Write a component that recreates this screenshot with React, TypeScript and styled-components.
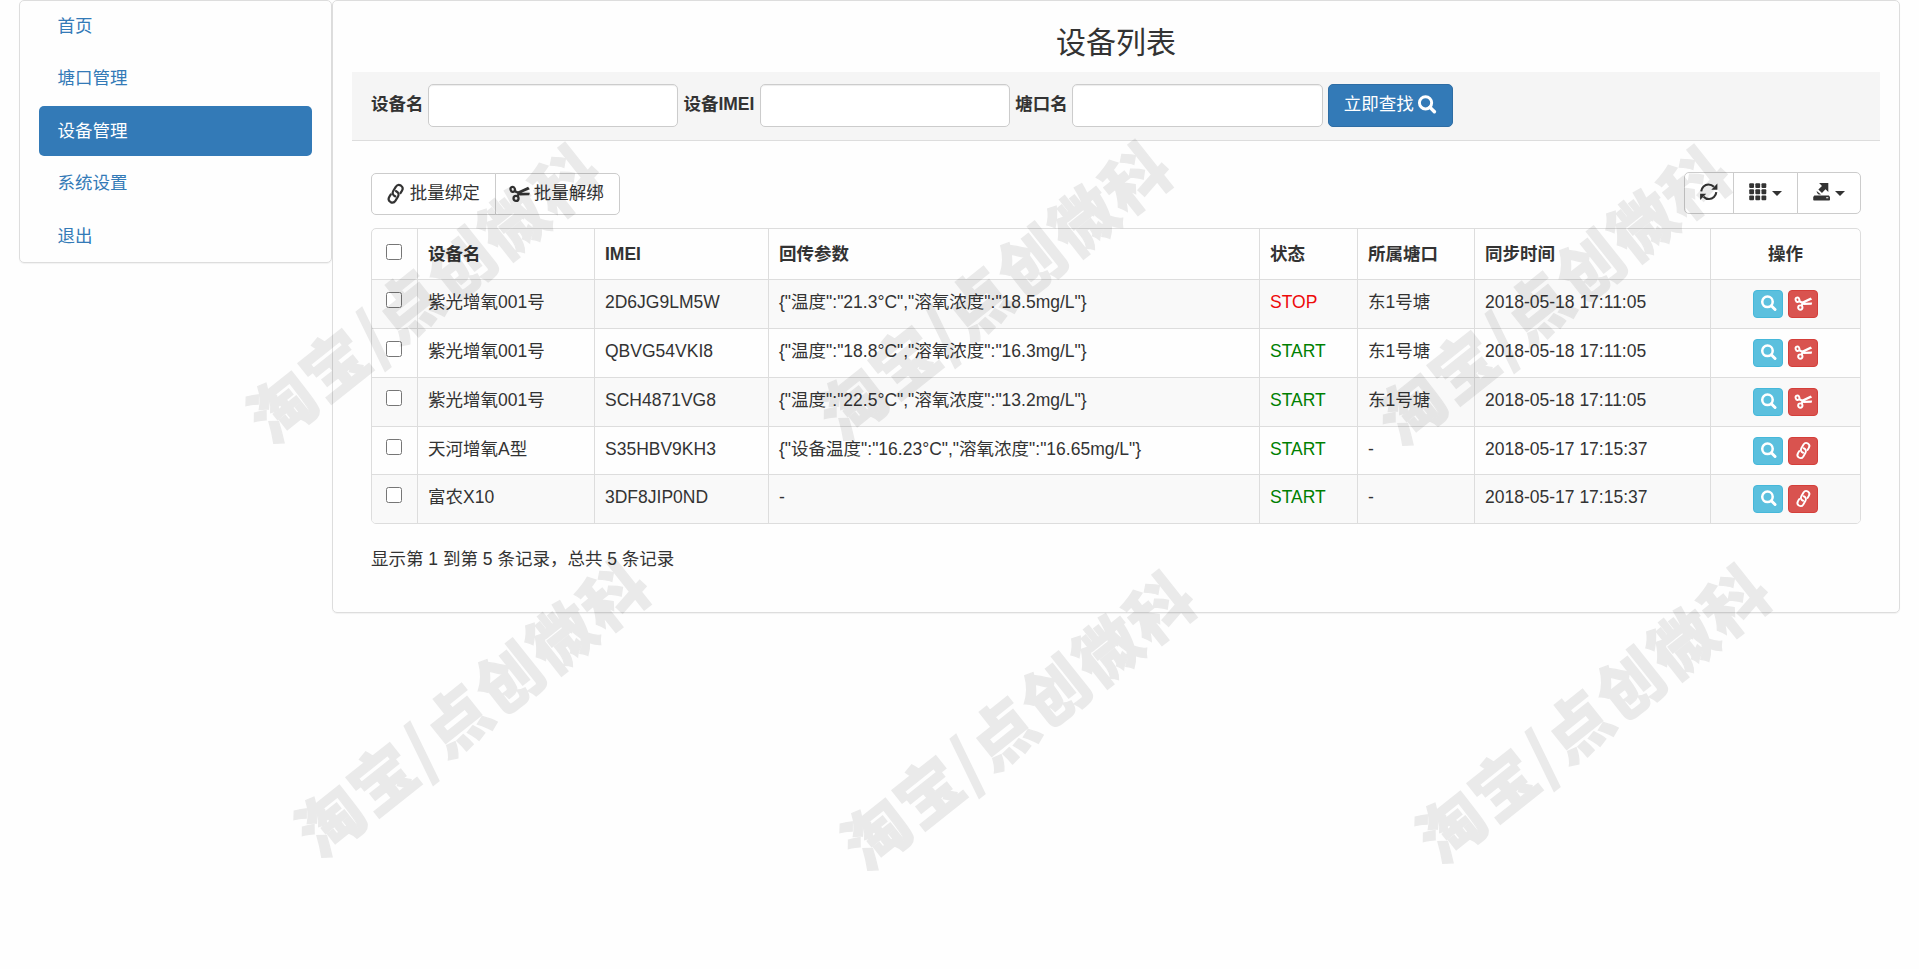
import React from 'react';
import styled, { createGlobalStyle, css } from 'styled-components';

const Global = createGlobalStyle`
  *, *::before, *::after { box-sizing: border-box; }
  html, body { margin: 0; height: 100%; overflow: hidden; }
  body {
    background: #fefefe;
    color: #333;
    font-family: "Liberation Sans", "Noto Sans CJK SC", sans-serif;
    font-size: 17.5px;
    line-height: 25px;
  }
  button, input { font: inherit; color: inherit; }
`;

/* ---------- icons ---------- */

const Svg = styled.svg<{ $size?: number }>`
  display: block;
  flex: none;
  width: ${p => p.$size ?? 17.5}px;
  height: ${p => p.$size ?? 17.5}px;
  overflow: visible;
`;

type IconProps = { size?: number };

const SearchIcon = ({ size }: IconProps) => (
  <Svg $size={size} viewBox="0 0 16 16" fill="none" stroke="currentColor">
    <circle cx="6.9" cy="6.2" r="5.6" strokeWidth="2.7" />
    <path d="M11 10.4 15 14.4" strokeWidth="3.2" strokeLinecap="round" />
  </Svg>
);

const LinkIcon = ({ size }: IconProps) => (
  <Svg $size={size} viewBox="0 0 16 16" fill="none" stroke="currentColor" strokeWidth="2" strokeLinecap="round">
    <path d="M7.6 10.4C5.400 9.600 4.600 7.400 5.700 5.500L8 1.700c1.100-1.700 3-2.200 4.700-1.200 1.700 1.100 2 3.100.9 4.900L12.300 7.400" />
    <path d="M8.200 5.600C10.400 6.400 11.200 8.600 10.100 10.500L7.800 14.300c-1.100 1.700-3 2.200-4.700 1.200-1.700-1.100-2-3.100-.9-4.900L3.500 8.600" />
  </Svg>
);

const ScissorsIcon = ({ size }: IconProps) => (
  <Svg $size={size} viewBox="0 0 16 16" fill="none" stroke="currentColor">
    <ellipse cx="1.6" cy="4" rx="2" ry="2.3" strokeWidth="2" transform="rotate(-20 1.6 4)" />
    <circle cx="4.6" cy="12.3" r="2.3" strokeWidth="2.1" />
    <path d="M3.5 5.6 7.300 7.500 6 10.400" strokeWidth="2.2" />
    <path d="M6.200 6 15.600 1.700 17.200 3.800 9.500 7.100 17.200 7 16.700 9.400 8.200 9.500 5.800 7.900Z" fill="currentColor" stroke="none" />
  </Svg>
);

const RefreshIcon = ({ size }: IconProps) => (
  <Svg $size={size} viewBox="0 0 16 16" fill="none" stroke="currentColor" strokeWidth="1.9">
    <path d="M1.100 7.600C1.400 4 4.300 1.300 7.700 1.300c2 0 3.700.8 5 2.200" />
    <path d="M14.900 8.400c-.3 3.600-3.200 6.300-6.600 6.300-2 0-3.700-.8-5-2.200" />
    <path d="M15.900.500V6.100H10.300ZM.1 15.500V9.900H5.700Z" fill="currentColor" stroke="none" />
  </Svg>
);

const GridIcon = ({ size }: IconProps) => (
  <Svg $size={size} viewBox="0 0 16 16" fill="currentColor">
    {[0.2, 5.8, 11.4].map(y =>
      [0.2, 5.8, 11.4].map(x => <rect key={`${x}-${y}`} x={x} y={y} width="4.4" height="4.4" rx=".9" />),
    )}
  </Svg>
);

const ExportIcon = ({ size }: IconProps) => (
  <Svg $size={size} viewBox="0 0 16 16" fill="currentColor">
    <path d="M5.600 0H14V8.300L11.400 5.700 8.200 9.100 4.900 5.900 8.200 2.700Z" />
    <path d="M3.300 7.400 7.300 10.500 5.400 10.600C4.200 10 3.500 9 3.300 7.400Z" />
    <path fillRule="evenodd" d="M1.200 11.500H14.500L15.500 12.700V15.300Q15.500 16 14.800 16H.9Q.2 16 .2 15.300V12.700ZM12 13v1h2v-1Z" />
  </Svg>
);

/* ---------- layout ---------- */

const Page = styled.div`
  display: flex;
  align-items: flex-start;
  padding: 0 19px;
  height: 969px;
  position: relative;
  overflow: hidden;
`;

const panel = css`
  border: 1px solid #ddd;
  border-radius: 5px;
  box-shadow: 0 1px 1px rgba(0, 0, 0, 0.05);
`;

const Sidebar = styled.nav`
  ${panel}
  flex: none;
  width: 313px;
  height: 263px;
  padding: 0 19px;
  display: flex;
  flex-direction: column;
  gap: 2.5px;
`;

const NavItem = styled.a<{ $active?: boolean }>`
  display: block;
  height: 50px;
  padding: 12.5px 18.5px;
  border-radius: 5px;
  color: ${p => (p.$active ? '#fff' : '#337ab7')};
  background: ${p => (p.$active ? '#337ab7' : 'transparent')};
`;

const Main = styled.main`
  ${panel}
  flex: none;
  width: 1568px;
  height: 613px;
  padding: 0 19px;
`;

const Title = styled.h3`
  margin: 25px 0 13px;
  font-size: 30px;
  line-height: 33px;
  font-weight: 400;
  text-align: center;
`;

const SearchBar = styled.form`
  display: flex;
  align-items: flex-start;
  gap: 5px;
  height: 69px;
  padding: 12px 19px;
  background: #f5f5f5;
  border-bottom: 1px solid #ddd;
`;

const Label = styled.label<{ $width: number }>`
  width: ${p => p.$width}px;
  white-space: nowrap;
  font-weight: 700;
  line-height: 41px;
`;

const TextInput = styled.input`
  width: 250.4px;
  height: 43px;
  padding: 7px 15px;
  border: 1px solid #ccc;
  border-radius: 5px;
  background: #fff;
  box-shadow: inset 0 1px 1px rgba(0, 0, 0, 0.075);
`;

const SubmitButton = styled.button`
  display: flex;
  align-items: center;
  gap: 4px;
  width: 125px;
  height: 43px;
  padding: 0 0 2px 15px;
  border: 1px solid #2e6da4;
  border-radius: 5px;
  background: #337ab7;
  color: #fff;
  white-space: nowrap;
`;

const Content = styled.section`
  padding: 31px 19px 0 19px;
`;

const Toolbar = styled.div`
  display: flex;
  justify-content: space-between;
  align-items: flex-start;
  height: 56px;
`;

const ButtonGroup = styled.div<{ $lowered?: boolean }>`
  display: flex;
  margin-top: ${p => (p.$lowered ? 1 : 0)}px;
`;

const GroupButton = styled.button<{ $width: number; $labelled?: boolean }>`
  display: flex;
  align-items: center;
  justify-content: center;
  gap: 5px;
  width: ${p => p.$width}px;
  height: 42px;
  padding: 0 0 ${p => (p.$labelled ? 1 : 3)}px;
  border: 1px solid #ccc;
  background: #fff;
  white-space: nowrap;
  & + & { margin-left: -1px; }
  &:first-child { border-radius: 5px 0 0 5px; }
  &:last-child { border-radius: 0 5px 5px 0; }
`;

const Caret = styled.span`
  margin-top: 4px;
  border: 5px solid transparent;
  border-top-color: #333;
  border-bottom: 0;
`;

const TableFrame = styled.div`
  border: 1px solid #ddd;
  border-radius: 5px;
  overflow: hidden;
`;

const Table = styled.table`
  width: 100%;
  table-layout: fixed;
  border-collapse: separate;
  border-spacing: 0;
`;

const Col = styled.col<{ $width?: number }>`
  ${p => p.$width && `width: ${p.$width}px;`}
`;

const Cell = styled.td<{ $center?: boolean; $color?: string }>`
  height: 49px;
  padding: 10px;
  vertical-align: top;
  text-align: ${p => (p.$center ? 'center' : 'left')};
  color: ${p => p.$color ?? 'inherit'};
  border-top: 1px solid #ddd;
  white-space: nowrap;
  & + & { border-left: 1px solid #ddd; }
`;

const HeadCell = styled.th<{ $center?: boolean }>`
  height: 50px;
  padding: 12.5px 10px 12px;
  vertical-align: top;
  text-align: ${p => (p.$center ? 'center' : 'left')};
  font-weight: 700;
  & + & { border-left: 1px solid #ddd; }
`;

const Row = styled.tr`
  &:nth-child(odd) { background: #f9f9f9; }
  &:nth-child(4) > td { height: 48px; padding-bottom: 9px; }
`;

const Check = styled.input.attrs({ type: 'checkbox' })`
  display: block;
  width: 16px;
  height: 16px;
  margin: 2px auto 0 4px;
`;

const Actions = styled.div`
  display: flex;
  justify-content: center;
  gap: 5px;
`;

const ActionButton = styled.button<{ $tone: 'info' | 'danger' }>`
  display: flex;
  justify-content: center;
  width: 30px;
  height: 28px;
  padding: 5px 0 0;
  border: 1px solid ${p => (p.$tone === 'info' ? '#46b8da' : '#d43f3a')};
  border-radius: 4px;
  background: ${p => (p.$tone === 'info' ? '#5bc0de' : '#d9534f')};
  color: #fff;
`;

const Summary = styled.p`
  margin: 23px 0 0;
`;

/* Diagonal brand marks stamped over the page. */
const Watermark = styled.span<{ $x: number; $y: number }>`
  position: absolute;
  left: ${p => p.$x}px;
  top: ${p => p.$y}px;
  transform: translate(-50%, -50%) rotate(-38.5deg);
  font-family: "Noto Sans CJK SC", sans-serif;
  font-weight: 900;
  font-size: 65px;
  line-height: 1;
  letter-spacing: 2px;
  white-space: nowrap;
  color: #000;
  -webkit-text-stroke: 1.2px #000;
  opacity: 0.075;
  pointer-events: none;
`;

/* ---------- data ---------- */

const NAV = ['首页', '塘口管理', '设备管理', '系统设置', '退出'];
const COLS = [45, 177, 174, 491, 98, 117, 236, undefined];

type Device = { name: string; imei: string; params: string; status: 'STOP' | 'START'; pond: string; time: string; bound: boolean };

const DEVICES: Device[] = [
  { name: '紫光增氧001号', imei: '2D6JG9LM5W', params: '{"温度":"21.3°C","溶氧浓度":"18.5mg/L"}', status: 'STOP', pond: '东1号塘', time: '2018-05-18 17:11:05', bound: true },
  { name: '紫光增氧001号', imei: 'QBVG54VKI8', params: '{"温度":"18.8°C","溶氧浓度":"16.3mg/L"}', status: 'START', pond: '东1号塘', time: '2018-05-18 17:11:05', bound: true },
  { name: '紫光增氧001号', imei: 'SCH4871VG8', params: '{"温度":"22.5°C","溶氧浓度":"13.2mg/L"}', status: 'START', pond: '东1号塘', time: '2018-05-18 17:11:05', bound: true },
  { name: '天河增氧A型', imei: 'S35HBV9KH3', params: '{"设备温度":"16.23°C","溶氧浓度":"16.65mg/L"}', status: 'START', pond: '-', time: '2018-05-17 17:15:37', bound: false },
  { name: '富农X10', imei: '3DF8JIP0ND', params: '-', status: 'START', pond: '-', time: '2018-05-17 17:15:37', bound: false },
];

const MARKS = [
  [423, 291], [993, 288], [1552, 293],
  [471, 705], [1017, 718], [1592, 711],
];

export default function App() {
  return (
    <Page>
      <Global />
      <Sidebar>
        {NAV.map(label => (
          <NavItem key={label} $active={label === '设备管理'}>{label}</NavItem>
        ))}
      </Sidebar>
      <Main>
        <Title>设备列表</Title>
        <SearchBar>
          <Label $width={52}>设备名</Label>
          <TextInput />
          <Label $width={71.5}>设备IMEI</Label>
          <TextInput />
          <Label $width={52}>塘口名</Label>
          <TextInput />
          <SubmitButton type="button">立即查找<SearchIcon /></SubmitButton>
        </SearchBar>
        <Content>
          <Toolbar>
            <ButtonGroup $lowered>
              <GroupButton $labelled $width={125}><LinkIcon />批量绑定</GroupButton>
              <GroupButton $labelled $width={125}><ScissorsIcon />批量解绑</GroupButton>
            </ButtonGroup>
            <ButtonGroup>
              <GroupButton $width={50}><RefreshIcon /></GroupButton>
              <GroupButton $width={65}><GridIcon /><Caret /></GroupButton>
              <GroupButton $width={64}><ExportIcon /><Caret /></GroupButton>
            </ButtonGroup>
          </Toolbar>
          <TableFrame>
            <Table>
              <colgroup>
                {COLS.map((w, i) => <Col key={i} $width={w} />)}
              </colgroup>
              <thead>
                <tr>
                  <HeadCell><Check /></HeadCell>
                  <HeadCell>设备名</HeadCell>
                  <HeadCell>IMEI</HeadCell>
                  <HeadCell>回传参数</HeadCell>
                  <HeadCell>状态</HeadCell>
                  <HeadCell>所属塘口</HeadCell>
                  <HeadCell>同步时间</HeadCell>
                  <HeadCell $center>操作</HeadCell>
                </tr>
              </thead>
              <tbody>
                {DEVICES.map(d => (
                  <Row key={d.imei}>
                    <Cell><Check /></Cell>
                    <Cell>{d.name}</Cell>
                    <Cell>{d.imei}</Cell>
                    <Cell>{d.params}</Cell>
                    <Cell $color={d.status === 'STOP' ? '#ee0a0a' : 'green'}>{d.status}</Cell>
                    <Cell>{d.pond}</Cell>
                    <Cell>{d.time}</Cell>
                    <Cell $center>
                      <Actions>
                        <ActionButton $tone="info"><SearchIcon size={15} /></ActionButton>
                        <ActionButton $tone="danger">
                          {d.bound ? <ScissorsIcon size={15} /> : <LinkIcon size={15} />}
                        </ActionButton>
                      </Actions>
                    </Cell>
                  </Row>
                ))}
              </tbody>
            </Table>
          </TableFrame>
          <Summary>显示第 1 到第 5 条记录，总共 5 条记录</Summary>
        </Content>
      </Main>
      {MARKS.map(([x, y]) => (
        <Watermark key={`${x}-${y}`} $x={x} $y={y}>淘宝/点创微科</Watermark>
      ))}
    </Page>
  );
}
